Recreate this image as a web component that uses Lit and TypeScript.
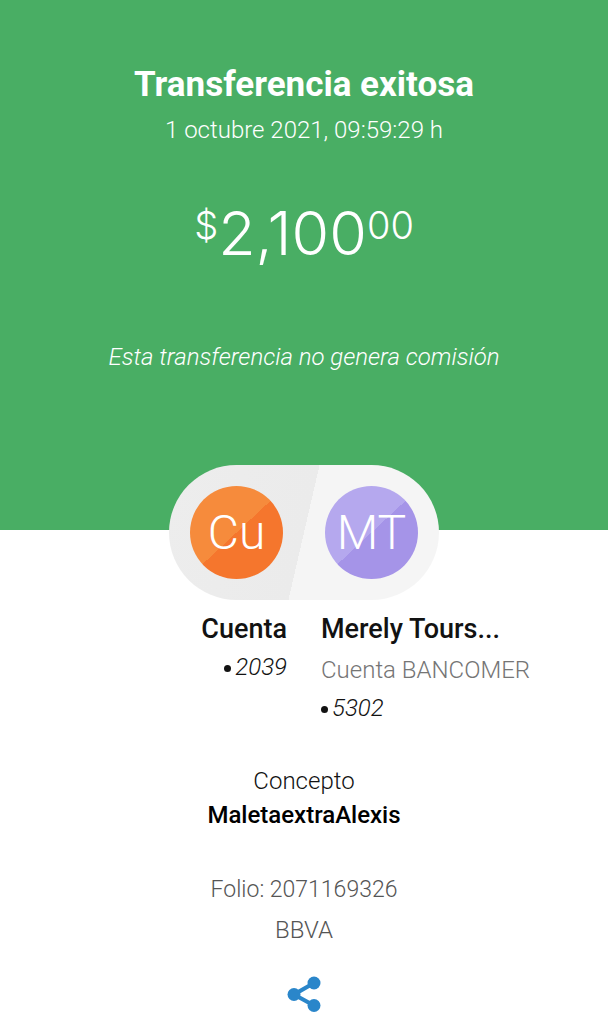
import { LitElement, html, css } from "lit";
import { customElement, property } from "lit/decorators.js";

@customElement("account-avatar")
class AccountAvatar extends LitElement {
  @property() initials = "";
  @property({ reflect: true }) tone = "orange";

  static styles = css`
    :host {
      display: grid;
      place-items: center;
      width: 93px;
      height: 93px;
      border-radius: 50%;
      color: #fff;
      font-size: 48px;
      line-height: 56px;
      font-weight: 300;
      background: linear-gradient(137deg, #f68b3c 50%, #f5762d 50%);
    }
    :host([tone="purple"]) {
      background: linear-gradient(137deg, #b5a8ee 50%, #a594e8 50%);
    }
  `;

  render() {
    return html`<span>${this.initials}</span>`;
  }
}

@customElement("app-root")
class AppRoot extends LitElement {
  static styles = css`
    :host {
      display: block;
      min-height: 100vh;
      background: #fff;
      color: #121212;
      font-family: Roboto, "Open Sans", sans-serif;
      font-size: 24px;
      line-height: 32px;
      font-weight: 300;
      text-align: center;
    }
    h1, h2, p, dl, dt, dd {
      margin: 0;
      font-size: inherit;
      font-weight: inherit;
    }
    .hero {
      background: #49ae64;
      color: #fff;
      padding: 64px 24px 157px;
    }
    .title {
      font-size: 35px;
      line-height: 42px;
      font-weight: 700;
    }
    .date {
      margin-top: 8px;
    }
    .amount {
      display: flex;
      justify-content: center;
      align-items: flex-start;
      margin-top: 52px;
      font-family: Inter, Roboto, sans-serif;
      font-size: 61px;
      line-height: 70px;
    }
    .small {
      font-size: 38px;
      line-height: 54px;
    }
    .fee {
      margin-top: 73px;
      font-style: italic;
    }
    .pill {
      position: relative;
      display: flex;
      justify-content: space-between;
      align-items: center;
      box-sizing: border-box;
      width: 270px;
      height: 135px;
      margin: -65px auto 0;
      padding: 0 21px;
      border-radius: 68px;
      background: linear-gradient(103deg, #ededed 0%, #ebebeb 50%, #f5f5f5 50%);
    }
    .accounts {
      display: grid;
      grid-template-columns: 1fr 1fr;
      gap: 34px;
      margin-top: 13px;
      text-align: left;
    }
    .from {
      text-align: right;
    }
    .name {
      font-size: 27px;
      font-weight: 500;
    }
    .bank {
      margin-top: 9px;
      color: #757575;
    }
    .number {
      margin-top: 6px;
      font-style: italic;
    }
    .dot {
      display: inline-block;
      width: 7px;
      height: 7px;
      margin-right: 4px;
      border-radius: 50%;
      background: currentColor;
      vertical-align: middle;
    }
    .concept {
      margin-top: 41px;
    }
    .strong {
      margin-top: 2px;
      font-weight: 500;
      color: #000;
    }
    .folio {
      margin-top: 43px;
      font-size: 23px;
      color: #555;
    }
    .brand {
      margin-top: 8px;
      color: #555;
    }
    .share {
      display: block;
      margin: 30px auto 0;
      padding: 0;
      border: 0;
      background: none;
      color: #2a86ca;
      cursor: pointer;
    }
    .share svg {
      display: block;
    }
  `;

  render() {
    return html`
      <main>
        <header class="hero">
          <h1 class="title">Transferencia exitosa</h1>
          <p class="date">1 octubre 2021, 09:59:29 h</p>
          <p class="amount">
            <span class="small">$</span><span>2,100</span><span class="small">00</span>
          </p>
          <p class="fee">Esta transferencia no genera comisión</p>
        </header>
        <div class="pill">
          <account-avatar initials="Cu"></account-avatar>
          <account-avatar initials="MT" tone="purple"></account-avatar>
        </div>
        <section class="accounts">
          <div class="from">
            <h2 class="name">Cuenta</h2>
            <p class="number"><span class="dot"></span>2039</p>
          </div>
          <div>
            <h2 class="name">Merely Tours...</h2>
            <p class="bank">Cuenta BANCOMER</p>
            <p class="number"><span class="dot"></span>5302</p>
          </div>
        </section>
        <dl class="concept">
          <dt>Concepto</dt>
          <dd class="strong">MaletaextraAlexis</dd>
        </dl>
        <p class="folio">Folio: 2071169326</p>
        <p class="brand">BBVA</p>
        <button class="share" type="button" aria-label="Compartir">
          <svg width="34" height="36" viewBox="0 0 34 36" fill="currentColor" aria-hidden="true">
            <path d="M27 7 7 18.500 27 29.500" fill="none" stroke="currentColor" stroke-width="4.200" />
            <circle cx="27" cy="7" r="6.500" />
            <circle cx="7" cy="18.500" r="6.500" />
            <circle cx="27" cy="29.500" r="6.500" />
          </svg>
        </button>
      </main>
    `;
  }
}
